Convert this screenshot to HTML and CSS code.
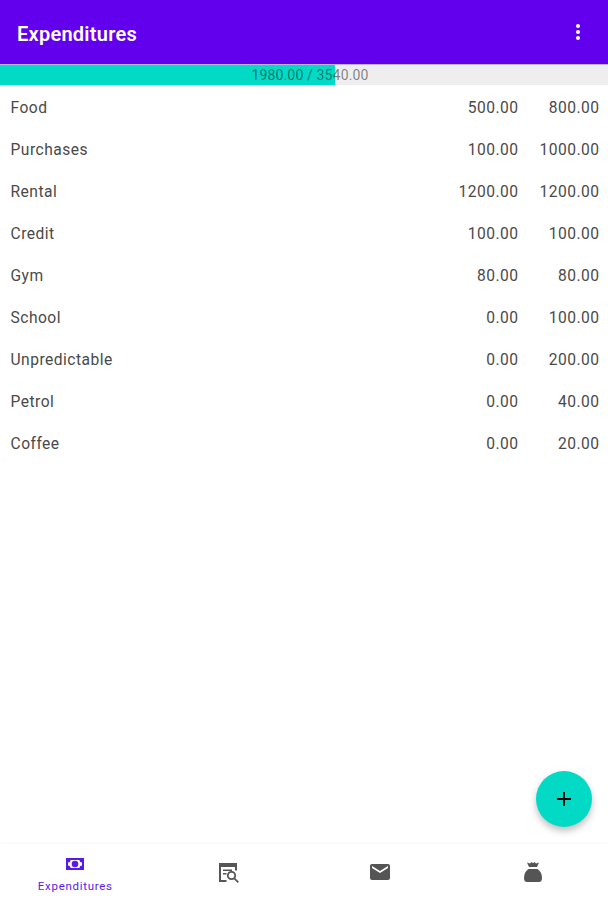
FILE: index.html
```html
<!DOCTYPE html>
<html lang="en">
<head>
  <meta charset="UTF-8">
  <title>Expenditures</title>
  <link rel="stylesheet" href="styles.css">
</head>
<body>
  <!-- App bar -->
  <header class="app-bar">
    <h1>Expenditures</h1>
    <svg class="menu-icon" viewBox="0 0 24 24">
      <path d="M12 8c1.1 0 2-.9 2-2s-.9-2-2-2-2 .9-2 2 .9 2 2 2zm0 2c-1.1 0-2 .9-2 2s.9 2 2 2 2-.9 2-2-.9-2-2-2zm0 6c-1.1 0-2 .9-2 2s.9 2 2 2 2-.9 2-2-.9-2-2-2z"/>
    </svg>
  </header>

  <!-- Total spent / planned -->
  <div class="progress">
    <div class="progress-fill" style="width: 55.1%"></div>
    <div class="progress-text">1980.00 / 3540.00</div>
  </div>

  <!-- Category list -->
  <main class="list">
    <div class="row"><span class="name">Food</span><span class="amount">500.00</span><span class="amount">800.00</span></div>
    <div class="row"><span class="name">Purchases</span><span class="amount">100.00</span><span class="amount">1000.00</span></div>
    <div class="row"><span class="name">Rental</span><span class="amount">1200.00</span><span class="amount">1200.00</span></div>
    <div class="row"><span class="name">Credit</span><span class="amount">100.00</span><span class="amount">100.00</span></div>
    <div class="row"><span class="name">Gym</span><span class="amount">80.00</span><span class="amount">80.00</span></div>
    <div class="row"><span class="name">School</span><span class="amount">0.00</span><span class="amount">100.00</span></div>
    <div class="row"><span class="name">Unpredictable</span><span class="amount">0.00</span><span class="amount">200.00</span></div>
    <div class="row"><span class="name">Petrol</span><span class="amount">0.00</span><span class="amount">40.00</span></div>
    <div class="row"><span class="name">Coffee</span><span class="amount">0.00</span><span class="amount">20.00</span></div>
  </main>

  <!-- Add button -->
  <button class="fab" aria-label="Add">
    <svg viewBox="0 0 24 24"><path d="M19 12.900h-6.100V19h-1.800v-6.100H5v-1.800h6.100V5h1.800v6.100H19z"/></svg>
  </button>

  <!-- Bottom navigation -->
  <nav class="bottom-nav">
    <div class="tab active">
      <svg viewBox="0 0 24 24">
        <path fill-rule="evenodd" d="M3 6h18v12H3zM7.500 8A2.500 2.500 0 0 1 5 10.500v3A2.500 2.500 0 0 1 7.500 16h9a2.500 2.500 0 0 1 2.500-2.500v-3A2.500 2.500 0 0 1 16.500 8z"/>
        <circle cx="12" cy="12" r="3.300"/>
      </svg>
      <span>Expenditures</span>
    </div>
    <div class="tab">
      <svg viewBox="0 0 24 24">
        <path d="M3 3h18v7.500h-2V7H5v13h5.500v2H3z"/>
        <path d="M7 9.500h9v1.500H7zM7 13h3.500v1.500H7z"/>
        <circle class="lens" cx="15.500" cy="15.500" r="3.700"/>
        <path class="lens" d="M18.100 18.100L22.300 22.300"/>
      </svg>
    </div>
    <div class="tab">
      <svg viewBox="0 0 24 24">
        <path d="M20 4H4c-1.100 0-2 .9-2 2v12c0 1.100.9 2 2 2h16c1.100 0 2-.9 2-2V6c0-1.100-.9-2-2-2zm0 4l-8 5-8-5V6l8 5 8-5v2z"/>
      </svg>
    </div>
    <div class="tab">
      <svg viewBox="0 0 24 24">
        <path d="M6 2.500l3 1L10.500 2 12 3.200 13.500 2 15 3.500l3-1L16 7H8z"/>
        <path d="M7.500 9h9c3 1.700 4.500 5.500 4.500 9 0 2.500-1 4-3 4H6c-2 0-3-1.500-3-4 0-3.500 1.500-7.300 4.500-9z"/>
      </svg>
    </div>
  </nav>
</body>
</html>
```

FILE: styles.css
```css
* {
  box-sizing: border-box;
}
body {
  margin: 0;
  height: 900px;
  display: flex;
  flex-direction: column;
  position: relative;
  overflow: hidden;
  background: #fff;
  font-family: Roboto, sans-serif;
}
/* App bar */
.app-bar {
  height: 64px;
  padding: 3px 18px 0 17px;
  display: flex;
  align-items: center;
  justify-content: space-between;
  background: #6200ee;
  color: #fff;
}
.app-bar h1 {
  margin: 0;
  font-size: 20px;
  font-weight: 600;
  letter-spacing: 0.25px;
}
.menu-icon {
  width: 24px;
  height: 24px;
  margin-top: -3px;
  fill: #fff;
}
/* Progress bar */
.progress {
  position: relative;
  height: 21px;
  border-top: 1px solid #b9b3ee;
  background: #eee;
}
.progress-fill {
  height: 100%;
  background: #03dac5;
}
.progress-text {
  position: absolute;
  inset: 0;
  text-align: center;
  font-size: 14px;
  line-height: 20px;
  letter-spacing: 0.15px;
  padding-left: 12px;
  color: rgba(0, 0, 0, 0.48);
}
/* Category list */
.list {
  flex: 1;
  padding: 2px 8.5px 0 10.5px;
}
.row {
  height: 42px;
  display: flex;
  align-items: center;
  font-size: 15.6px;
  letter-spacing: 0.48px;
  color: #4a4a4a;
}
.name {
  flex: 1;
}
.amount {
  width: 81px;
  text-align: right;
}
/* Add button */
.fab {
  position: absolute;
  right: 16px;
  bottom: 73px;
  width: 56px;
  height: 56px;
  padding: 0;
  border: 0;
  border-radius: 50%;
  display: flex;
  align-items: center;
  justify-content: center;
  background: #03dac5;
  box-shadow: 0 4px 7px rgba(0, 0, 0, 0.25);
}
.fab svg {
  width: 24px;
  height: 24px;
}
/* Bottom navigation */
.bottom-nav {
  height: 56px;
  display: flex;
  background: #fff;
  box-shadow: 0 -1px 3px rgba(0, 0, 0, 0.03);
}
.tab {
  flex: 1;
  padding-left: 2px;
  display: flex;
  flex-direction: column;
  align-items: center;
  justify-content: center;
  font-size: 11.5px;
  line-height: 16px;
  letter-spacing: 0.7px;
  color: #555;
}
.tab svg {
  width: 24px;
  height: 24px;
  fill: currentColor;
}
.active {
  padding: 2px 0 0;
  color: #5a1ae6;
}
.active svg {
  margin-bottom: 2px;
}
.tab .lens {
  fill: none;
  stroke: currentColor;
  stroke-width: 1.8;
}
```
